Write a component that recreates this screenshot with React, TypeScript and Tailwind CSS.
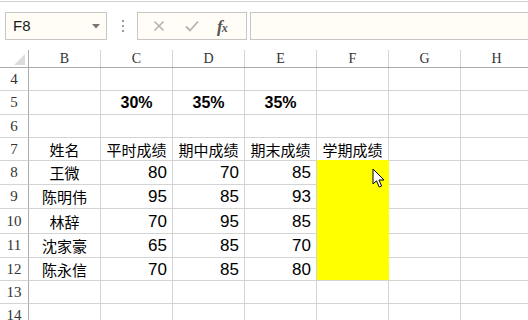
import React from 'react';

const COLS = ['B', 'C', 'D', 'E', 'F', 'G', 'H'];

// row number, height in px (bottom border included), cell contents B..H
type Row = { n: number; h: string; cells: (string | null)[] };

const rows: Row[] = [
  { n: 4, h: 'h-[23px]', cells: [null, null, null, null, null, null, null] },
  { n: 5, h: 'h-[24px]', cells: [null, '30%', '35%', '35%', null, null, null] },
  { n: 6, h: 'h-[23px]', cells: [null, null, null, null, null, null, null] },
  { n: 7, h: 'h-[23px]', cells: ['姓名', '平时成绩', '期中成绩', '期末成绩', '学期成绩', null, null] },
  { n: 8, h: 'h-[24px]', cells: ['王微', '80', '70', '85', null, null, null] },
  { n: 9, h: 'h-[24px]', cells: ['陈明伟', '95', '85', '93', null, null, null] },
  { n: 10, h: 'h-[25px]', cells: ['林辞', '70', '95', '85', null, null, null] },
  { n: 11, h: 'h-[24px]', cells: ['沈家豪', '65', '85', '70', null, null, null] },
  { n: 12, h: 'h-[23px]', cells: ['陈永信', '70', '85', '80', null, null, null] },
  { n: 13, h: 'h-[23px]', cells: [null, null, null, null, null, null, null] },
  { n: 14, h: 'h-[23px]', cells: [null, null, null, null, null, null, null] },
];

const cjk = "font-['Noto_Sans_CJK_SC',sans-serif]";
const headFont = "font-['Liberation_Serif',serif]";

function Cell({ row, col, value }: { row: number; col: number; value: string | null }) {
  const isYellow = col === 4 && row >= 8 && row <= 12;
  const isNumber = value !== null && /^\d+$/.test(value);
  const isPct = value !== null && value.endsWith('%');

  let border = 'border-r border-b border-[#d4d4d4]';
  if (isYellow) {
    border = row === 12 ? 'border-r border-b border-r-[#ffff00] border-b-[#d4d4d4]' : 'border-r border-b border-[#ffff00]';
  } else if (col === 4 && row === 7) {
    border = 'border-r border-b border-r-[#d4d4d4] border-b-[#ffff00]';
  }

  let text = '';
  if (isPct) text = "justify-center font-bold text-[16px] font-['Liberation_Sans',sans-serif]";
  else if (isNumber) text = "justify-end pr-[5px] text-[17px] font-['Liberation_Sans',sans-serif]";
  else text = `justify-center text-[15px] ${cjk}`;

  return (
    <div
      className={`w-[72px] shrink-0 h-full flex items-center ${border} ${text} ${
        isYellow ? 'bg-[#ffff00]' : ''
      } text-black leading-none`}
    >
      {value}
    </div>
  );
}

function NameBox() {
  return (
    <div className="ml-[5px] w-[102px] h-[28px] border border-[#c6c6c6] bg-[#fffdf6] flex items-center justify-between pl-[7px] pr-[6px]">
      <span className="text-[15px] text-[#1a1a1a] font-['Liberation_Sans',sans-serif]">F8</span>
      <svg width="8" height="5" viewBox="0 0 8 5">
        <path d="M0 0 L8 0 L4 4.5 Z" fill="#777" />
      </svg>
    </div>
  );
}

function FormulaButtons() {
  return (
    <div className="w-[110px] h-[28px] border border-[#c6c6c6] bg-[#fffdf6] flex items-center">
      <svg width="12" height="12" viewBox="0 0 12 12" className="ml-[15px]">
        <path d="M1.5 1.5 L10.5 10.5 M10.5 1.5 L1.5 10.5" stroke="#b4b4b4" strokeWidth="1.6" />
      </svg>
      <svg width="14" height="12" viewBox="0 0 14 12" className="ml-[20px]">
        <path d="M1 6.5 L5 10.5 L13 1.5" stroke="#b4b4b4" strokeWidth="1.8" fill="none" />
      </svg>
      <span className="ml-[18px] text-[17px] italic font-bold text-[#555] font-['Liberation_Serif',serif] tracking-[-1px] leading-none">
        f<span className="text-[12px]">x</span>
      </span>
    </div>
  );
}

function Cursor() {
  return (
    <svg
      width="14"
      height="21"
      viewBox="0 0 14 21"
      className="absolute left-[372px] top-[168px]"
    >
      <path
        d="M1 1 L1 16 L4.5 12.8 L7.2 19 L9.6 18 L7 12 L12 12 Z"
        fill="#fff"
        stroke="#000"
        strokeWidth="1"
        strokeLinejoin="miter"
      />
    </svg>
  );
}

export default function App() {
  return (
    <div className="relative w-[528px] h-[320px] overflow-hidden bg-white">
      {/* top ribbon edge */}
      <div className="h-[2px] border-b border-[#d2d2d2]" />

      {/* formula bar */}
      <div className="mt-[10px] flex items-center h-[28px]">
        <NameBox />
        <div className="ml-[15px] w-[3px] flex flex-col gap-[3px]">
          <div className="w-[2px] h-[2px] bg-[#9a9a9a]" />
          <div className="w-[2px] h-[2px] bg-[#9a9a9a]" />
          <div className="w-[2px] h-[2px] bg-[#9a9a9a]" />
        </div>
        <div className="ml-[12px]">
          <FormulaButtons />
        </div>
        <div className="ml-[3px] flex-1 h-[28px] border-y border-l border-[#c6c6c6] bg-[#fffdf6]" />
      </div>

      {/* sheet */}
      <div className="mt-[10px]">
        {/* column headers */}
        <div className="flex h-[18px] border-b border-[#ababab]">
          <div className="relative w-[29px] shrink-0 border-r border-[#ababab]">
            <svg width="11" height="11" viewBox="0 0 11 11" className="absolute right-[3px] bottom-[2px]">
              <path d="M11 0 L11 11 L0 11 Z" fill="#dcdcdc" />
            </svg>
          </div>
          {COLS.map((c) => (
            <div
              key={c}
              className={`w-[72px] shrink-0 border-r border-[#d4d4d4] flex items-center justify-center text-[14px] text-[#333] ${headFont}`}
            >
              {c}
            </div>
          ))}
        </div>

        {rows.map((r) => (
          <div key={r.n} className={`flex ${r.h}`}>
            <div
              className={`w-[29px] shrink-0 h-full border-r border-r-[#ababab] border-b border-b-[#d4d4d4] flex items-center justify-center text-[15px] text-[#333] ${headFont}`}
            >
              {r.n}
            </div>
            {r.cells.map((v, i) => (
              <Cell key={i} row={r.n} col={i} value={v} />
            ))}
          </div>
        ))}
      </div>

      <Cursor />
    </div>
  );
}
